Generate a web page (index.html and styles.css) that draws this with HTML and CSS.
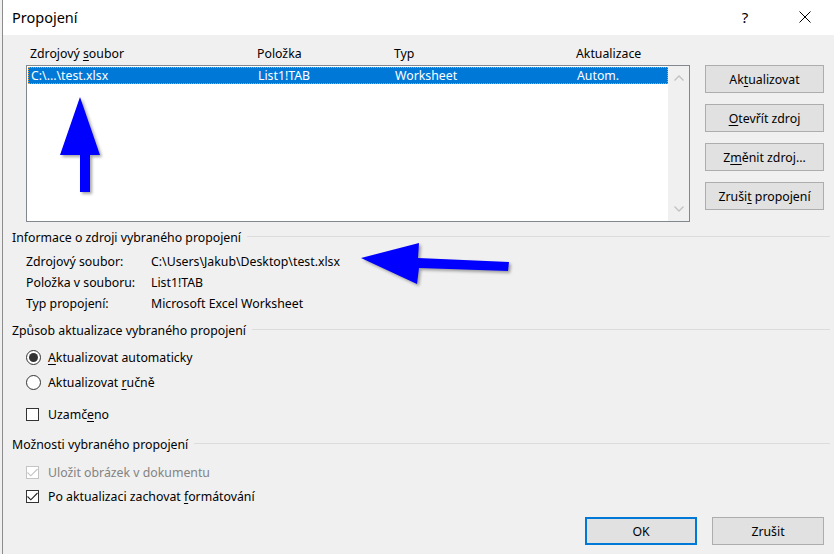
FILE: index.html
```html
<!DOCTYPE html>
<html lang="cs">
  <head>
    <meta charset="UTF-8" />
    <title>Propojení</title>
    <link rel="stylesheet" href="styles.css">
  </head>
  <body>
    <div class="dialog">
      <div class="titlebar">
        <span class="title">Propojení</span>
        <span class="help">?</span>
        <span class="close">
          <svg width="12" height="12" viewBox="0 0 12 12">
            <path d="M0.5 0.5L11.5 11.5M11.5 0.5L0.5 11.5" stroke="#000" stroke-width="1" fill="none" />
          </svg>
        </span>
      </div>
      <div class="content">
        <div class="links-row">
          <div class="links">
            <div class="cols head">
              <span>Zdrojový <u>s</u>oubor</span>
              <span>Položka</span>
              <span>Typ</span>
              <span>Aktualizace</span>
            </div>
            <div class="listbox">
              <div class="rows">
                <div class="cols row selected">
                  <span>C:\...\test.xlsx</span>
                  <span>List1!TAB</span>
                  <span>Worksheet</span>
                  <span>Autom.</span>
                </div>
              </div>
              <div class="scrollbar">
                <svg width="10" height="6" viewBox="0 0 10 6">
                  <path d="M0.5 5.5L5 1L9.5 5.5" stroke="#c2c2c2" stroke-width="1.3" fill="none" />
                </svg>
                <svg width="10" height="6" viewBox="0 0 10 6">
                  <path d="M0.5 0.5L5 5L9.5 0.5" stroke="#c2c2c2" stroke-width="1.3" fill="none" />
                </svg>
              </div>
            </div>
          </div>
          <div class="side">
            <button class="btn">Ak<u>t</u>ualizovat</button>
            <button class="btn"><u>O</u>tevřít zdroj</button>
            <button class="btn">Z<u>m</u>ěnit zdroj...</button>
            <button class="btn">Zruši<u>t</u> propojení</button>
          </div>
        </div>

        <div class="group group-info">
          <div class="group-title"><span>Informace o zdroji vybraného propojení</span></div>
          <div class="info">
            <span>Zdrojový soubor:</span><span>C:\Users\Jakub\Desktop\test.xlsx</span>
            <span>Položka v souboru:</span><span>List1!TAB</span>
            <span>Typ propojení:</span><span>Microsoft Excel Worksheet</span>
          </div>
        </div>

        <div class="group group-update">
          <div class="group-title"><span>Způsob aktualizace vybraného propojení</span></div>
          <div class="option"><span class="radio checked"></span><span><u>A</u>ktualizovat automaticky</span></div>
          <div class="option"><span class="radio"></span><span>Aktualizovat <u>r</u>učně</span></div>
          <div class="option locked"><span class="check"></span><span>Uzamč<u>e</u>no</span></div>
        </div>

        <div class="group group-options">
          <div class="group-title"><span>Možnosti vybraného propojení</span></div>
          <div class="option disabled">
            <span class="check">
              <svg width="11" height="9" viewBox="0 0 11 9"><path d="M0.5 4.5L3.8 7.8L10.5 1" stroke="#c4c4c4" stroke-width="1.1" fill="none" /></svg>
            </span>
            <span>Uložit obrázek v dokumentu</span>
          </div>
          <div class="option">
            <span class="check">
              <svg width="11" height="9" viewBox="0 0 11 9"><path d="M0.5 4.5L3.8 7.8L10.5 1" stroke="#222" stroke-width="1.1" fill="none" /></svg>
            </span>
            <span>Po aktualizaci zachovat <u>f</u>ormátování</span>
          </div>
        </div>

        <div class="footer">
          <button class="btn default">OK</button>
          <button class="btn">Zrušit</button>
        </div>
      </div>

      <svg class="arrow arrow-up" width="50" height="104" viewBox="0 0 50 104">
        <path d="M21 1L41 59H31V96H21V59H1Z" fill="#0000ff" />
      </svg>
      <svg class="arrow arrow-left" width="160" height="46" viewBox="0 0 160 46">
        <path d="M1 16L59 1L58 16L149 20L148 29L59 26L57 42Z" fill="#0000ff" />
      </svg>
    </div>
  </body>
</html>
```

FILE: styles.css
```css
:root {
  --face: #f0f0f0;
  --btn-face: #e1e1e1;
  --btn-border: #adadad;
  --accent: #0078d7;
  --text: #000000;
  --rule: #dcdcdc;
}

* {
  box-sizing: border-box;
}

body {
  margin: 0;
  width: 834px;
  height: 554px;
  overflow: hidden;
  background: var(--face);
  font-family: "Noto Sans", "Open Sans", sans-serif;
  font-size: 12.3px;
  color: var(--text);
}

u {
  text-decoration-thickness: 1px;
  text-underline-offset: 2px;
}

.dialog {
  position: relative;
  height: 554px;
  margin-left: 2px;
  border-left: 1px solid #8c8c8c;
  display: flex;
  flex-direction: column;
}

/* title bar */

.titlebar {
  height: 35px;
  background: #ffffff;
  display: flex;
  align-items: center;
  padding-left: 9px;
  padding-bottom: 1px;
}

.title {
  flex: 1;
  font-size: 14.5px;
}

.help {
  width: 46px;
  text-align: center;
  font-size: 15px;
  margin-right: 14px;
}

.close {
  width: 46px;
  margin-right: 6px;
  display: flex;
  justify-content: center;
}

/* content */

.content {
  flex: 1;
  display: flex;
  flex-direction: column;
}

.links-row {
  display: flex;
  gap: 15px;
  padding-top: 10px;
  padding-left: 23px;
}

.links {
  width: 664px;
}

.cols {
  display: grid;
  grid-template-columns: 227px 137px 182px 1fr;
  line-height: 17px;
}

.head {
  padding-left: 4px;
  margin-bottom: 3px;
}

.listbox {
  height: 157px;
  background: #ffffff;
  border: 1px solid #828790;
  display: flex;
}

.rows {
  flex: 1;
  padding: 1px 0 0 1px;
}

.row {
  padding-left: 3px;
  height: 17px;
}

.row.selected {
  background: var(--accent);
  color: #ffffff;
  outline: 1px dotted #f19a3a;
  outline-offset: -1px;
}

.scrollbar {
  width: 21px;
  background: var(--face);
  display: flex;
  flex-direction: column;
  justify-content: space-between;
  align-items: center;
  padding: 9px 0 9px 0;
}

.side {
  display: flex;
  flex-direction: column;
  gap: 11px;
  padding-top: 20px;
}

.btn {
  font-family: inherit;
  font-size: 12.3px;
  color: var(--text);
  background: var(--btn-face);
  border: 1px solid var(--btn-border);
  height: 28px;
  width: 119px;
  padding: 0;
}

.btn.default {
  border: 2px solid var(--accent);
}

/* groups */

.group-title {
  display: flex;
  align-items: center;
  gap: 6px;
  padding-left: 9px;
  padding-right: 4px;
  line-height: 17px;
}

.group-title::after {
  content: "";
  flex: 1;
  height: 1px;
  background: var(--rule);
  margin-top: -2px;
}

.group-info {
  margin-top: 7px;
}

.info {
  display: grid;
  grid-template-columns: 125px 1fr;
  padding-left: 23px;
  margin-top: 5px;
  line-height: 21px;
}

.group-update {
  margin-top: 8px;
}

.group-update .group-title {
  margin-bottom: 6px;
}

.option {
  display: flex;
  align-items: center;
  gap: 7px;
  padding-left: 23px;
  height: 25px;
}

.option.locked {
  margin-top: 7px;
}

.radio {
  width: 15px;
  height: 15px;
  border: 1px solid #333333;
  border-radius: 50%;
  background: #ffffff;
  display: flex;
  align-items: center;
  justify-content: center;
}

.radio.checked::after {
  content: "";
  width: 9px;
  height: 9px;
  border-radius: 50%;
  background: #333333;
}

.check {
  width: 13px;
  height: 13px;
  margin-right: 2px;
  border: 1px solid #333333;
  background: #ffffff;
  display: flex;
  align-items: center;
  justify-content: center;
}

.group-options {
  margin-top: 9px;
}

.group-options .group-title {
  margin-bottom: 7px;
}

.group-options .option {
  height: 24px;
}

.option.disabled {
  color: #838383;
}

.option.disabled .check {
  border-color: #c4c4c4;
}

.footer {
  margin-top: auto;
  display: flex;
  justify-content: flex-end;
  gap: 15px;
  padding: 0 10px 9px 0;
}

.footer .btn {
  width: 112px;
}

/* annotation arrows */

.arrow {
  position: absolute;
  filter: drop-shadow(2px 2px 1.5px rgba(0, 0, 0, 0.35));
}

.arrow-up {
  left: 56px;
  top: 96px;
}

.arrow-left {
  left: 357px;
  top: 242px;
}
```
